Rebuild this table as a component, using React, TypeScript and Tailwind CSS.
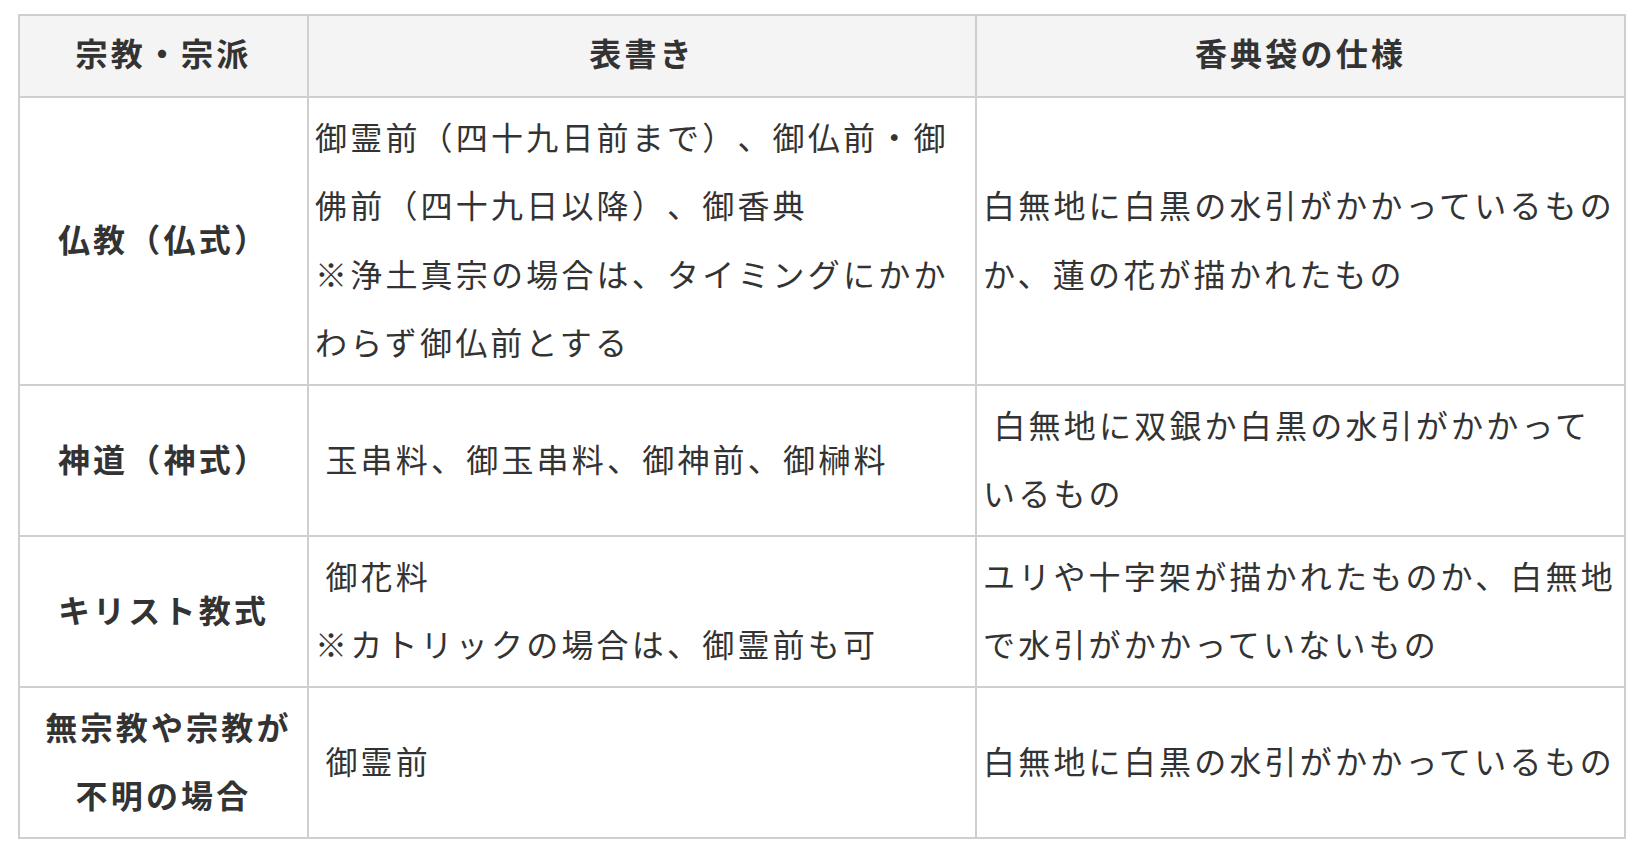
import React from "react";

const font = {
  fontFamily: '"Noto Sans CJK JP", "Noto Sans", sans-serif',
};

const th =
  "border-2 border-[#cfcfcf] bg-[#f4f4f4] px-[6px] pt-[2px] pb-[9px] text-center align-middle font-bold text-[#333333] whitespace-nowrap";
const tdHead =
  "border-2 border-[#cfcfcf] bg-white px-[6px] pt-[4px] pb-[8px] text-center align-middle font-bold text-[#333333] whitespace-nowrap";
const td =
  "border-2 border-[#cfcfcf] bg-white px-[6px] pt-[4px] pb-[8px] text-left align-middle font-normal text-[#333333] whitespace-nowrap";

export default function App() {
  return (
    <div className="min-h-screen bg-white pl-[18px] pt-[14px] pr-[2px]" style={font}>
      <table className="w-[1606px] table-fixed border-collapse text-[32px] leading-[68.5px] tracking-[0.1em] [text-spacing-trim:space-all]">
        <colgroup>
          <col className="w-[289px]" />
          <col className="w-[668px]" />
          <col className="w-[649px]" />
        </colgroup>
        <thead>
          <tr>
            <th className={th}>宗教・宗派</th>
            <th className={th}>表書き</th>
            <th className={th}>香典袋の仕様</th>
          </tr>
        </thead>
        <tbody>
          <tr>
            <td className={tdHead}>仏教（仏式）</td>
            <td className={td}>
              御霊前（四十九日前まで）、御仏前・御
              <br />
              佛前（四十九日以降）、御香典
              <br />
              ※浄土真宗の場合は、タイミングにかか
              <br />
              わらず御仏前とする
            </td>
            <td className={td}>
              白無地に白黒の水引がかかっているもの
              <br />
              か、蓮の花が描かれたもの
            </td>
          </tr>
          <tr>
            <td className={tdHead}>神道（神式）</td>
            <td className={td}>{"\u00a0"}玉串料、御玉串料、御神前、御榊料</td>
            <td className={td}>
              {"\u00a0"}白無地に双銀か白黒の水引がかかって
              <br />
              いるもの
            </td>
          </tr>
          <tr>
            <td className={tdHead}>キリスト教式</td>
            <td className={td}>
              {"\u00a0"}御花料
              <br />
              ※カトリックの場合は、御霊前も可
            </td>
            <td className={td}>
              ユリや十字架が描かれたものか、白無地
              <br />
              で水引がかかっていないもの
            </td>
          </tr>
          <tr>
            <td className={tdHead}>
              <span className="pl-[10px]">無宗教や宗教が</span>
              <br />
              不明の場合
            </td>
            <td className={td}>{"\u00a0"}御霊前</td>
            <td className={td}>白無地に白黒の水引がかかっているもの</td>
          </tr>
        </tbody>
      </table>
    </div>
  );
}
